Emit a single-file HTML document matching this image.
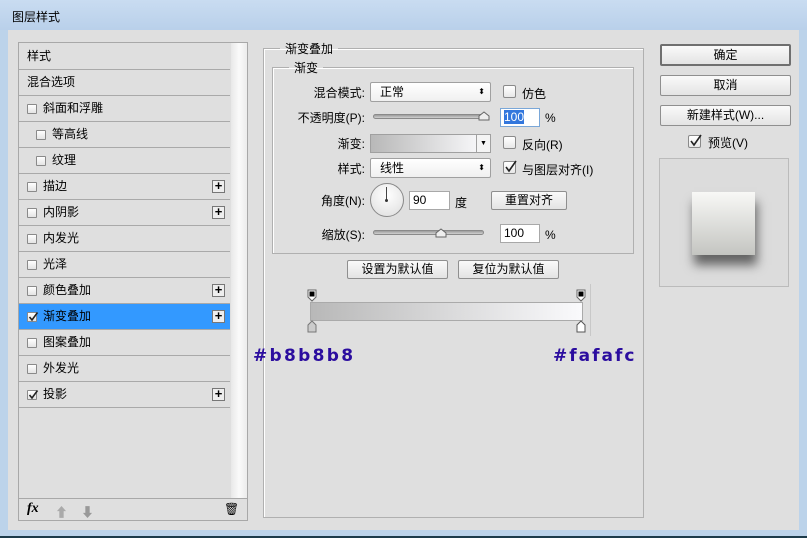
<!DOCTYPE html>
<html><head><meta charset="utf-8"><style>
*{margin:0;padding:0;box-sizing:border-box}
body{width:807px;height:538px;overflow:hidden;background:#bcd3ea;font-family:"Liberation Sans","Noto Sans CJK SC",sans-serif;font-size:12px;color:#000;position:relative}
.a{position:absolute}
.title{left:0;top:0;width:807px;height:30px;background:linear-gradient(#c9dcf1,#b9d0ea)}
.body{left:8px;top:30px;width:791px;height:500px;background:#dfdfdf}
.bot{left:0;top:536px;width:807px;height:2px;background:#1d3b4a}
.list{left:18px;top:42px;width:230px;height:479px;border:1px solid #a8a8a8;background:#dfdfdf}
.sb{left:231px;top:43px;width:16px;height:455px;background:linear-gradient(90deg,#e8e8e8,#fafafa 50%,#ececec)}
.row{position:absolute;left:19px;width:211px;height:26px;border-bottom:1px solid #a9a9a9;line-height:25px;padding-left:8px}
.cb{position:absolute;top:8px;width:10px;height:10px;border:1px solid #8a8a8a;background:linear-gradient(#fff,#e4e4e4);border-radius:1px}
.cb svg,.chk svg{position:absolute;left:0;top:-2px}
.t{position:absolute;left:24px}
.plus{position:absolute;right:5px;top:6px;width:13px;height:13px;border:1px solid #777;background:#eee;font-size:13px;line-height:10px;text-align:center;font-weight:bold}
.sel{background:#3399ff}
fieldset{position:absolute;border:1px solid #b0b0b0;box-shadow:1px 1px 0 #fff inset}
legend{padding:0 5px;margin-left:16px;font-size:12px}
.lbl{position:absolute;text-align:right;width:120px;line-height:14px}
.sel1{position:absolute;border:1px solid #a0a0a0;background:linear-gradient(#fff,#f0f0f0);border-radius:2px;height:20px;line-height:18px;padding-left:9px}
.inp{position:absolute;background:#fff;border:1px solid #a8a8a8;height:19px;line-height:17px;padding-left:3px}
.btn{position:absolute;border:1px solid #8f8f8f;border-radius:2px;background:linear-gradient(#fafafa,#e3e3e3);text-align:center;line-height:17px}
.slider{position:absolute;height:5px;border:1px solid #8a8a8a;border-radius:3px;background:linear-gradient(#9c9c9c,#d0d0d0)}
.chk{position:absolute;width:13px;height:13px;border:1px solid #8a8a8a;background:linear-gradient(#fff,#e8e8e8);border-radius:2px}
.hex{position:absolute;font-family:"DejaVu Sans","Liberation Sans",sans-serif;font-weight:bold;font-size:17px;color:#2b0d9f;letter-spacing:2.3px;line-height:20px}
</style></head><body>
<div class="a title"></div>
<div class="a" style="left:12px;top:8px;font-size:12px">图层样式</div>
<div class="a body"></div>
<div class="a bot"></div>

<div class="a list"></div>
<div class="a sb"></div>
<div class="row" style="top:44px">样式</div>
<div class="row" style="top:70px">混合选项</div>
<div class="row" style="top:96px"><span class="cb"></span><span class="t">斜面和浮雕</span></div>
<div class="row" style="top:122px"><span class="cb" style="left:17px"></span><span class="t" style="left:33px">等高线</span></div>
<div class="row" style="top:148px"><span class="cb" style="left:17px"></span><span class="t" style="left:33px">纹理</span></div>
<div class="row" style="top:174px"><span class="cb"></span><span class="t">描边</span><span class="plus">+</span></div>
<div class="row" style="top:200px"><span class="cb"></span><span class="t">内阴影</span><span class="plus">+</span></div>
<div class="row" style="top:226px"><span class="cb"></span><span class="t">内发光</span></div>
<div class="row" style="top:252px"><span class="cb"></span><span class="t">光泽</span></div>
<div class="row" style="top:278px"><span class="cb"></span><span class="t">颜色叠加</span><span class="plus">+</span></div>
<div class="row sel" style="top:304px"><span class="cb"><svg width="11" height="11"><path d="M1.5 6 L4 9 L9.5 1.5" fill="none" stroke="#222" stroke-width="1.6"/></svg></span><span class="t">渐变叠加</span><span class="plus">+</span></div>
<div class="row" style="top:330px"><span class="cb"></span><span class="t">图案叠加</span></div>
<div class="row" style="top:356px"><span class="cb"></span><span class="t">外发光</span></div>
<div class="row" style="top:382px"><span class="cb"><svg width="11" height="11"><path d="M1.5 6 L4 9 L9.5 1.5" fill="none" stroke="#222" stroke-width="1.6"/></svg></span><span class="t">投影</span><span class="plus">+</span></div>
<div class="a" style="left:19px;top:498px;width:228px;height:1px;background:#a8a8a8"></div>
<div class="a" style="left:27px;top:501px;font-style:italic;font-weight:bold;font-family:'Liberation Serif',serif;font-size:14px">fx</div>
<div class="a" style="left:55px;top:502px;color:#aaa;font-size:13px">⬆</div>
<div class="a" style="left:81px;top:502px;color:#999;font-size:13px">⬇</div>
<div class="a" style="left:224px;top:502px;font-size:12px">🗑</div>

<fieldset style="left:263px;top:40px;width:381px;height:478px"><legend>渐变叠加</legend></fieldset>
<fieldset style="left:272px;top:59px;width:362px;height:195px"><legend>渐变</legend></fieldset>

<div class="lbl" style="left:245px;top:86px">混合模式:</div>
<div class="sel1" style="left:370px;top:82px;width:121px">正常<span style="position:absolute;right:5px;font-size:8px">⬍</span></div>
<div class="chk" style="left:503px;top:85px"></div><div class="a" style="left:522px;top:85px">仿色</div>

<div class="lbl" style="left:245px;top:111px">不透明度(P):</div>
<div class="slider" style="left:373px;top:114px;width:111px"></div>
<svg class="a" style="left:478px;top:111px" width="12" height="10"><path d="M1 9 L1 5 L6 1 L11 5 L11 9 Z" fill="#eee" stroke="#666"/></svg>
<div class="inp" style="left:500px;top:108px;width:40px;border-color:#7aa7d8"><span style="background:#3377dd;color:#fff">100</span></div>
<div class="a" style="left:545px;top:111px">%</div>

<div class="lbl" style="left:245px;top:137px">渐变:</div>
<div class="a" style="left:370px;top:134px;width:121px;height:19px;border:1px solid #a0a0a0;background:linear-gradient(90deg,#b8b8b8,#fafafc 95%)"></div>
<div class="a" style="left:476px;top:134px;width:15px;height:19px;border:1px solid #a0a0a0;background:#f4f4f4;font-size:7px;text-align:center;line-height:17px">▼</div>
<div class="chk" style="left:503px;top:136px"></div><div class="a" style="left:522px;top:136px">反向(R)</div>

<div class="lbl" style="left:245px;top:162px">样式:</div>
<div class="sel1" style="left:370px;top:158px;width:121px">线性<span style="position:absolute;right:5px;font-size:8px">⬍</span></div>
<div class="chk" style="left:503px;top:161px"><svg width="13" height="13"><path d="M2 7 L5 11 L12 1" fill="none" stroke="#222" stroke-width="1.6"/></svg></div><div class="a" style="left:522px;top:161px">与图层对齐(I)</div>

<div class="lbl" style="left:245px;top:194px">角度(N):</div>
<div class="a" style="left:370px;top:183px;width:34px;height:34px;border:1px solid #888;border-radius:50%;background:radial-gradient(circle at 50% 35%,#fff,#ddd)"></div>
<div class="a" style="left:386px;top:187px;width:1px;height:13px;background:#444"></div>
<div class="a" style="left:385px;top:199px;width:3px;height:3px;border-radius:50%;background:#333"></div>
<div class="inp" style="left:409px;top:191px;width:41px">90</div>
<div class="a" style="left:455px;top:194px">度</div>
<div class="btn" style="left:491px;top:191px;width:76px;height:19px">重置对齐</div>

<div class="lbl" style="left:245px;top:228px">缩放(S):</div>
<div class="slider" style="left:373px;top:230px;width:111px"></div>
<svg class="a" style="left:435px;top:228px" width="12" height="10"><path d="M1 9 L1 5 L6 1 L11 5 L11 9 Z" fill="#eee" stroke="#666"/></svg>
<div class="inp" style="left:500px;top:224px;width:40px">100</div>
<div class="a" style="left:545px;top:228px">%</div>

<div class="btn" style="left:347px;top:260px;width:101px;height:19px">设置为默认值</div>
<div class="btn" style="left:458px;top:260px;width:101px;height:19px">复位为默认值</div>

<div class="a" style="left:590px;top:284px;width:1px;height:52px;background:#c8c8c8"></div>
<div class="a" style="left:310px;top:302px;width:273px;height:19px;border:1px solid #aaa;background:linear-gradient(90deg,#b8b8b8,#fafafc)"></div>
<svg class="a" style="left:306px;top:289px" width="12" height="13"><path d="M2 1 H10 V8 L6 12 L2 8 Z" fill="#fff" stroke="#666"/><rect x="3.5" y="2.5" width="5" height="5" fill="#000"/></svg>
<svg class="a" style="left:575px;top:289px" width="12" height="13"><path d="M2 1 H10 V8 L6 12 L2 8 Z" fill="#fff" stroke="#666"/><rect x="3.5" y="2.5" width="5" height="5" fill="#000"/></svg>
<svg class="a" style="left:306px;top:320px" width="12" height="13"><path d="M6 1 L10 5 V12 H2 V5 Z" fill="#ccc" stroke="#777"/></svg>
<svg class="a" style="left:575px;top:320px" width="12" height="13"><path d="M6 1 L10 5 V12 H2 V5 Z" fill="#fff" stroke="#555"/></svg>

<div class="hex" style="left:253px;top:346px">#b8b8b8</div>
<div class="hex" style="left:553px;top:346px;letter-spacing:2px">#fafafc</div>

<div class="btn" style="left:660px;top:44px;width:131px;height:22px;border:2px solid #6f6f6f;line-height:18px">确定</div>
<div class="btn" style="left:660px;top:75px;width:131px;height:21px;line-height:19px">取消</div>
<div class="btn" style="left:660px;top:105px;width:131px;height:21px;line-height:19px">新建样式(W)...</div>
<div class="chk" style="left:688px;top:135px"><svg width="13" height="13"><path d="M2 7 L5 11 L12 1" fill="none" stroke="#222" stroke-width="1.6"/></svg></div>
<div class="a" style="left:708px;top:134px">预览(V)</div>
<div class="a" style="left:659px;top:158px;width:130px;height:129px;border:1px solid #bbb;background:#dcdcdc"></div>
<div class="a" style="left:692px;top:192px;width:63px;height:63px;background:linear-gradient(#f8f8f6,#c4c5c1);box-shadow:2px 10px 10px rgba(0,0,0,.55)"></div>
</body></html>
